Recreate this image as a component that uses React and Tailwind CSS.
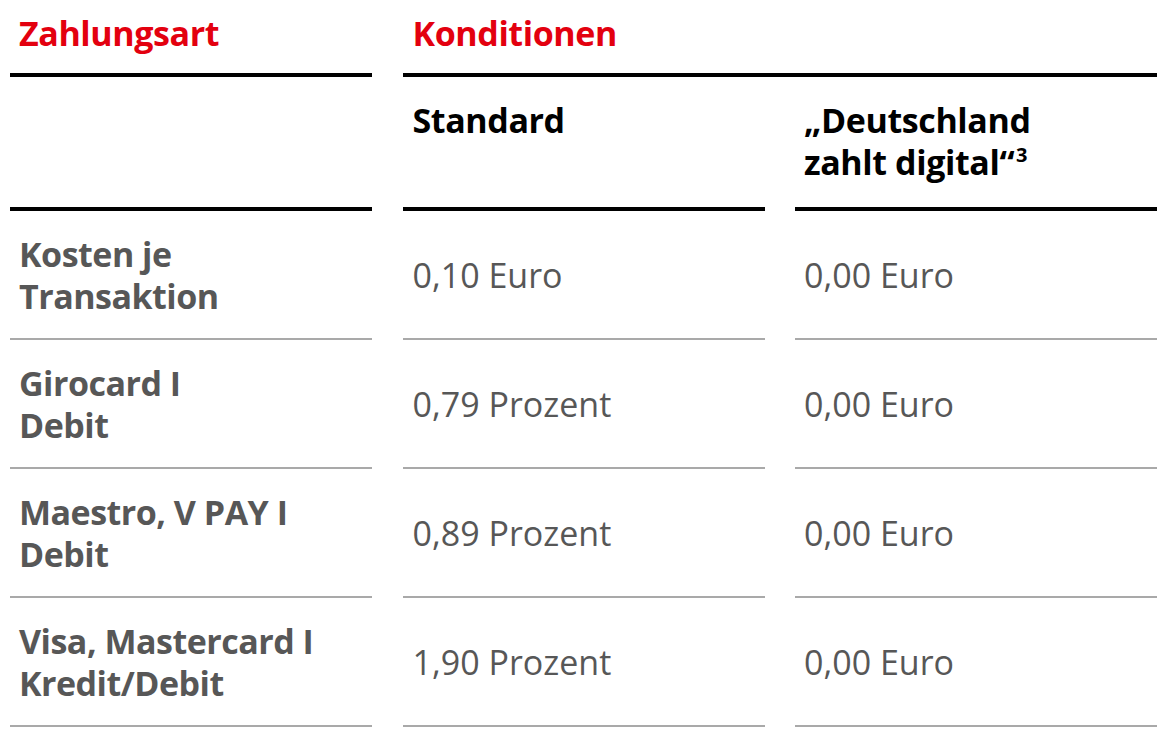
const rows = [
  { label: ["Kosten je", "Transaktion"], standard: "0,10 Euro", digital: "0,00 Euro" },
  { label: ["Girocard I", "Debit"], standard: "0,79 Prozent", digital: "0,00 Euro" },
  { label: ["Maestro, V PAY I", "Debit"], standard: "0,89 Prozent", digital: "0,00 Euro" },
  { label: ["Visa, Mastercard I", "Kredit/Debit"], standard: "1,90 Prozent", digital: "0,00 Euro" },
];

const App = () => {
  return (
    <div className="w-[1167px] h-[742px] bg-white px-[10px] font-['Open_Sans',sans-serif] text-[34px] leading-[42px]">
      <div className="grid grid-cols-3 gap-x-[30.5px]">
        {/* top headings */}
        <div className="pl-[9px] pt-[12px] pb-[19px] border-b-4 border-black font-bold tracking-[-0.4px] text-[#e3000f]">
          Zahlungsart
        </div>
        <div className="col-span-2 pl-[10px] pt-[12px] pb-[19px] border-b-4 border-black font-bold tracking-[-0.4px] text-[#e3000f]">
          Konditionen
        </div>

        {/* sub headings */}
        <div className="h-[134px] border-b-4 border-black"></div>
        <div className="pl-[10px] pt-[22px] h-[134px] border-b-4 border-black font-bold tracking-[-0.4px] text-black">
          Standard
        </div>
        <div className="pl-[9px] pt-[22px] h-[134px] border-b-4 border-black font-bold tracking-[-0.4px] text-black">
          <div>„Deutschland</div>
          <div>
            zahlt digital“
            <span className="inline-block align-top mt-[4px] ml-[2px] text-[20px] leading-none">3</span>
          </div>
        </div>

        {rows.map((row) => (
          <div key={row.standard + row.label[0]} className="contents">
            <div className="flex flex-col justify-center pl-[9px] pt-[22px] pb-[21px] border-b-2 border-[#a9a9a9] font-bold tracking-[-0.5px] text-[#575757]">
              <span>{row.label[0]}</span>
              <span>{row.label[1]}</span>
            </div>
            <div className="flex items-center pl-[10px] pt-[22px] pb-[21px] border-b-2 border-[#a9a9a9] text-[#575757]">
              {row.standard}
            </div>
            <div className="flex items-center pl-[9px] pt-[22px] pb-[21px] border-b-2 border-[#a9a9a9] text-[#575757]">
              {row.digital}
            </div>
          </div>
        ))}
      </div>
    </div>
  );
};

export default App;
